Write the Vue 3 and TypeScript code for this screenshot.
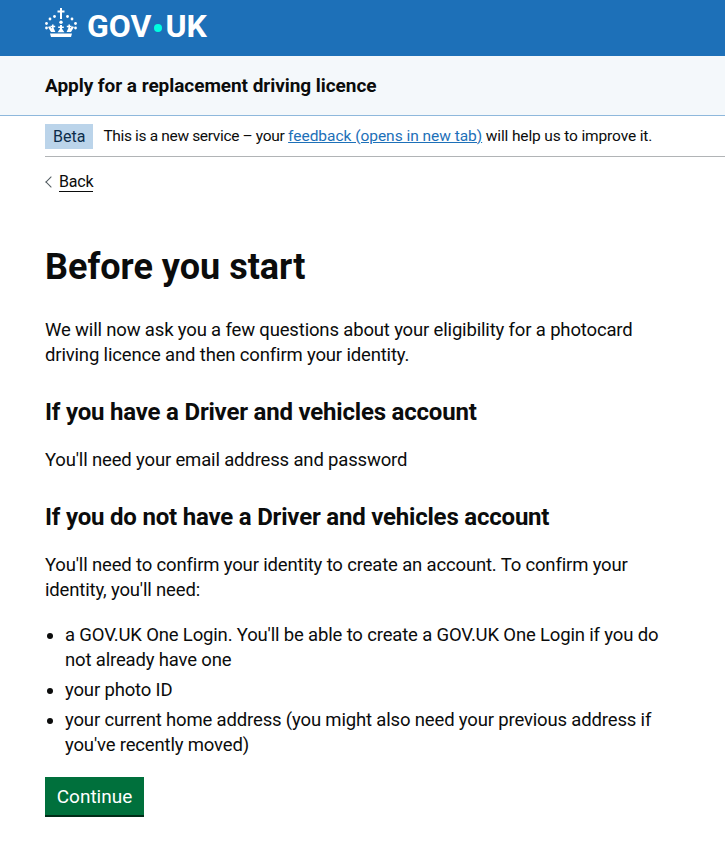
<script setup lang="ts">
const bullets: string[] = [
  "a GOV.UK One Login. You'll be able to create a GOV.UK One Login if you do not already have one",
  "your photo ID",
  "your current home address (you might also need your previous address if you've recently moved)",
]
</script>

<template>
  <div class="page">
    <header class="top">
      <svg class="crown" viewBox="0 0 32 30" width="32" height="30" aria-hidden="true">
        <g fill="#fff">
          <path d="M15 0h2v2.5h2.5v2H17V11h-2V4.5h-2.5v-2H15z" />
          <circle cx="9.5" cy="8.5" r="1.4" />
          <circle cx="22.5" cy="8.5" r="1.4" />
          <circle cx="5" cy="11" r="1.4" />
          <circle cx="27" cy="11" r="1.4" />
          <circle cx="16" cy="14.2" r="1.7" />
          <circle cx="1.5" cy="15.5" r="1.4" />
          <circle cx="30.5" cy="15.5" r="1.4" />
          <circle cx="1.5" cy="20" r="1.4" />
          <circle cx="30.5" cy="20" r="1.4" />
          <path d="M15 17h2v1.5h1.8v1.6H17v.6l2.4 3.6h-6.8L15 20.7v-.6h-1.8v-1.6H15zM7 16.5h1.6v1.3h1.6v1.5H8.6v.7l1.8 3.9H6l-3-5 1.4-.7L7 20.5v-1.2H5.4v-1.5H7zM25 16.5h-1.6v1.3h-1.6v1.5h1.6v.7l-1.8 3.9H26l3-5-1.4-.7L25 20.5v-1.2h1.6v-1.5H25z" />
          <path d="M5 25.4h22l-1 3.6H6z" />
        </g>
      </svg>
      <span class="wordmark">GOV<i class="dot"></i>UK</span>
    </header>

    <div class="service"><span class="service-name">Apply for a replacement driving licence</span></div>

    <div class="phase">
      <strong class="tag">Beta</strong>
      <span class="phase-text"><span class="lead">This is a new service – your</span> <a href="#" class="link">feedback (opens in new tab)</a> will help us to improve it.</span>
    </div>

    <div class="back"><a href="#" class="back-link">Back</a></div>

    <main class="main">
      <h1>Before you start</h1>
      <p>We will now ask you a few questions about your eligibility for a photocard driving licence and then confirm your identity.</p>
      <h2>If you have a Driver and vehicles account</h2>
      <p>You'll need your email address and password</p>
      <h2>If you do not have a Driver and vehicles account</h2>
      <p>You'll need to confirm your identity to create an account. To confirm your identity, you'll need:</p>
      <ul>
        <li v-for="b in bullets" :key="b">{{ b }}</li>
      </ul>
      <button type="button" class="continue">Continue</button>
    </main>
  </div>
</template>

<style>
html, body { margin: 0; background: #fff; }
</style>

<style scoped>
.page { font-family: Roboto, "Liberation Sans", sans-serif; color: #0b0c0c; font-size: 18.5px; letter-spacing: -0.16px; line-height: 25px; }
.top { height: 56px; background: #1d70b8; display: flex; align-items: flex-start; padding: 8px 0 0 45px; box-sizing: border-box; gap: 10px; overflow: hidden; }
.crown { display: block; }
.wordmark { font-weight: 700; font-size: 32px; letter-spacing: 0; line-height: 37px; color: #fff; display: inline-flex; align-items: center; }
.dot { width: 8px; height: 8px; border-radius: 50%; background: #00ffe0; margin: 2px 3px 0; display: inline-block; }
.service { height: 60px; background: #f4f8fb; border-bottom: 1px solid #8eb8dc; box-sizing: border-box; display: flex; align-items: center; padding-left: 45px; }
.service-name { font-weight: 700; font-size: 19px; letter-spacing: -0.05px; }
.phase { margin: 0 0 0 45px; height: 41px; border-bottom: 1px solid #b1b4b6; box-sizing: border-box; display: flex; align-items: center; gap: 10px; font-size: 15.5px; letter-spacing: -0.14px; }
.lead { letter-spacing: -0.34px; }
.tag { background: #bbd4ea; color: #0c2d4a; font-weight: 400; font-size: 16px; letter-spacing: 0; padding: 0 8px; height: 25px; line-height: 25px; }
.link { color: #1d70b8; text-decoration: underline; letter-spacing: -0.03px; }
.back { margin: 15px 0 0 45px; padding-left: 14px; font-size: 16px; letter-spacing: -0.2px; line-height: 19px; position: relative; height: 20px; }
.back::before { content: ""; position: absolute; left: 2px; top: 6px; width: 7px; height: 7px; border-left: 1px solid #505a5f; border-bottom: 1px solid #505a5f; transform: rotate(45deg); }
.back-link { display: inline-block; color: #0b0c0c; text-decoration: none; border-bottom: 1px solid #0b0c0c; }
.main { padding: 0 45px; margin-top: 50px; }
h1 { font-size: 36px; letter-spacing: 0; line-height: 50px; font-weight: 700; margin: 0 0 26px; }
p { margin: 0 0 20px; }
h2 { font-size: 24px; letter-spacing: -0.2px; line-height: 30px; font-weight: 700; margin: 29px 0 21px; }
ul { margin: 0 0 19px; padding-left: 20px; }
li { margin-bottom: 5px; }
.continue { display: block; box-sizing: border-box; border: 0; border-bottom: 2px solid #002d18; background: #00703c; color: #fff; font-family: inherit; font-size: 19px; letter-spacing: 0; line-height: 25px; height: 40px; width: 99px; padding: 1px 0 0; }
</style>
